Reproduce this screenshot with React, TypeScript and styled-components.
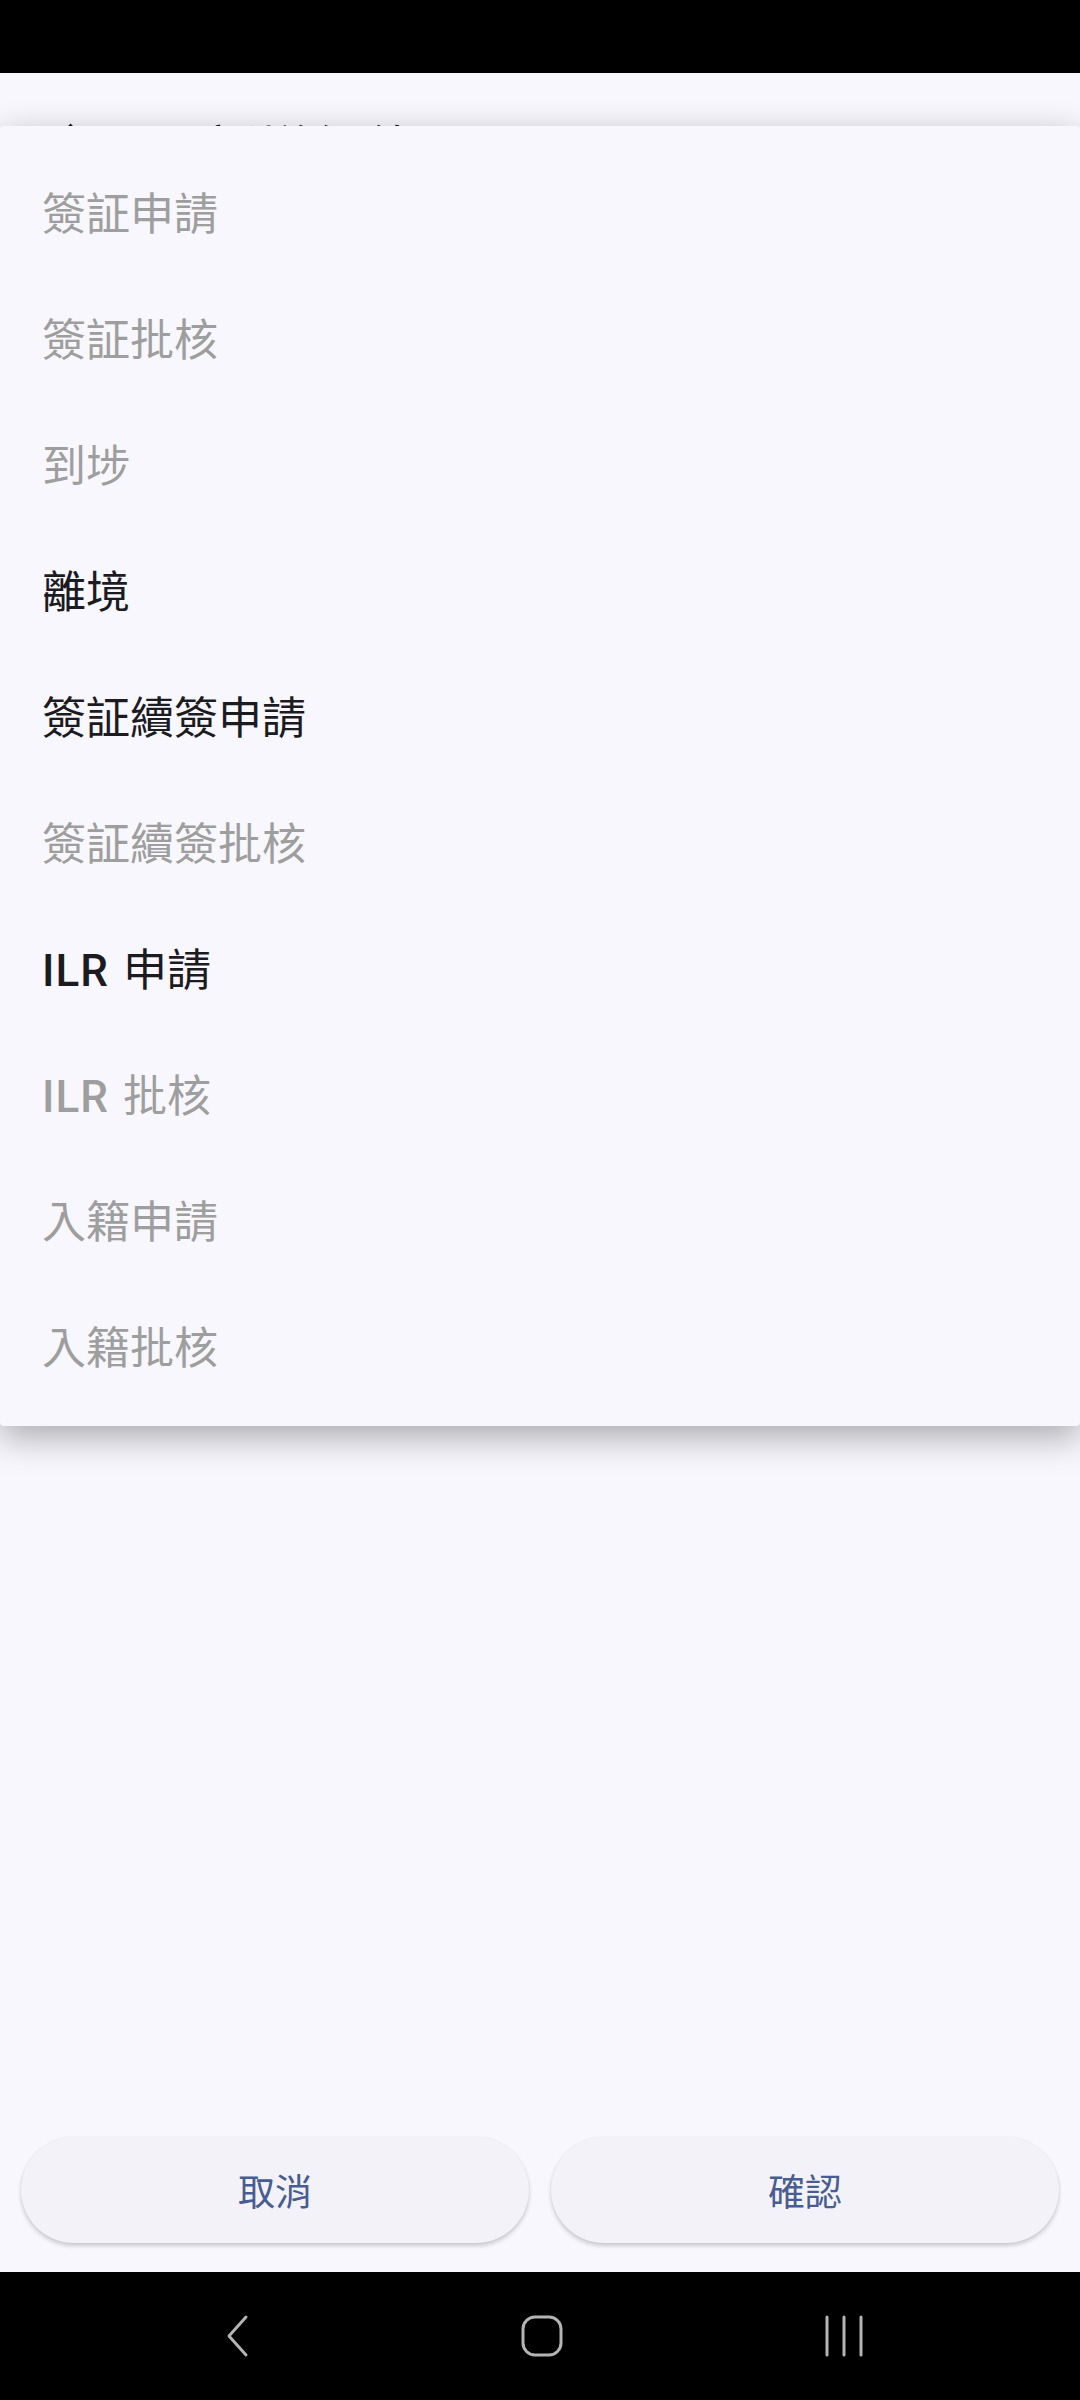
import React from "react";
import styled, { createGlobalStyle } from "styled-components";

const GlobalStyle = createGlobalStyle`
    html, body {
        margin: 0;
        padding: 0;
        background: #f8f7fd;
    }
    body {
        font-family: Roboto, "Noto Sans CJK TC", "Noto Sans", sans-serif;
    }
`;

const Screen = styled.div`
    position: relative;
    width: 1080px;
    height: 2400px;
    display: flex;
    flex-direction: column;
    background: #f8f7fd;
    overflow: hidden;
`;

const StatusBar = styled.div`
    height: 73px;
    background: #000;
    flex-shrink: 0;
`;

const TopBar = styled.div`
    height: 150px;
    display: flex;
    align-items: flex-start;
    padding: 48px 0 0 52px;
    gap: 112px;
    box-sizing: border-box;
`;

const Title = styled.div`
    font-size: 54px;
    line-height: 1;
    color: #1c1b1f;
    font-family: "Noto Sans CJK TC", sans-serif;
`;

const Body = styled.div`
    flex: 1;
`;

const Menu = styled.div`
    position: absolute;
    top: 126px;
    left: 0;
    right: 0;
    padding: 26px 0 14px;
    background: #f8f7fd;
    border-radius: 4px;
    box-shadow: 0 14px 34px rgba(0, 0, 0, 0.26), 0 0 34px rgba(0, 0, 0, 0.07);
`;

const MenuItem = styled.div<{ $disabled?: boolean }>`
    height: 126px;
    display: flex;
    align-items: center;
    padding-left: 42px;
    font-size: 44px;
    line-height: 1;
    color: ${(p) => (p.$disabled ? "#9e9e9e" : "#1c1b1f")};
`;

const Latin = styled.span`
    font-weight: 500;
    margin-right: 14px;
    letter-spacing: 1px;
`;

const ButtonRow = styled.div`
    display: flex;
    gap: 22px;
    padding: 0 21px 29px;
`;

const ActionButton = styled.div`
    flex: 1;
    height: 106px;
    border-radius: 53px;
    background: #f3f2f8;
    box-shadow: 0 3px 4px rgba(0, 0, 0, 0.18), 0 0 2px rgba(0, 0, 0, 0.06);
    display: flex;
    align-items: center;
    justify-content: center;
    font-size: 37px;
    color: #485d92;
    font-family: "Noto Sans CJK TC", sans-serif;
`;

const NavBar = styled.div`
    height: 128px;
    background: #000;
    display: flex;
    align-items: center;
    justify-content: center;
    padding-left: 4px;
    flex-shrink: 0;
`;

const NavSlot = styled.div`
    width: 302px;
    display: flex;
    justify-content: center;
    align-items: center;
`;

const items: { label: string; latin?: string; disabled?: boolean }[] = [
    { label: "簽証申請", disabled: true },
    { label: "簽証批核", disabled: true },
    { label: "到埗", disabled: true },
    { label: "離境" },
    { label: "簽証續簽申請" },
    { label: "簽証續簽批核", disabled: true },
    { label: "申請", latin: "ILR" },
    { label: "批核", latin: "ILR", disabled: true },
    { label: "入籍申請", disabled: true },
    { label: "入籍批核", disabled: true },
];

const BackIcon = () => (
    <svg width="40" height="44" viewBox="0 0 40 44">
        <path d="M26 3 L9 22 L26 41" fill="none" stroke="#b4b4b4" strokeWidth="3" strokeLinecap="round" strokeLinejoin="round" />
    </svg>
);

const HomeIcon = () => (
    <svg width="44" height="44" viewBox="0 0 44 44">
        <rect x="3" y="3" width="38" height="38" rx="12" fill="none" stroke="#b4b4b4" strokeWidth="3" />
    </svg>
);

const RecentsIcon = () => (
    <svg width="44" height="44" viewBox="0 0 44 44">
        <path d="M5 3 V41 M22 3 V41 M39 3 V41" fill="none" stroke="#b4b4b4" strokeWidth="3" strokeLinecap="round" />
    </svg>
);

const App = () => {
    return (
        <Screen>
            <GlobalStyle />
            <StatusBar />
            <TopBar>
                <svg width="40" height="40" viewBox="0 0 40 40">
                    <path d="M20 4 L4 20 L20 36 M4 20 H38" fill="none" stroke="#1c1b1f" strokeWidth="4" />
                </svg>
                <Title>新增紀錄</Title>
            </TopBar>
            <Body />
            <ButtonRow>
                <ActionButton>取消</ActionButton>
                <ActionButton>確認</ActionButton>
            </ButtonRow>
            <NavBar>
                <NavSlot>
                    <BackIcon />
                </NavSlot>
                <NavSlot>
                    <HomeIcon />
                </NavSlot>
                <NavSlot>
                    <RecentsIcon />
                </NavSlot>
            </NavBar>
            <Menu>
                {items.map((item) => (
                    <MenuItem key={(item.latin || "") + item.label} $disabled={item.disabled}>
                        {item.latin && <Latin>{item.latin}</Latin>}
                        {item.label}
                    </MenuItem>
                ))}
            </Menu>
        </Screen>
    );
};

export default App;
